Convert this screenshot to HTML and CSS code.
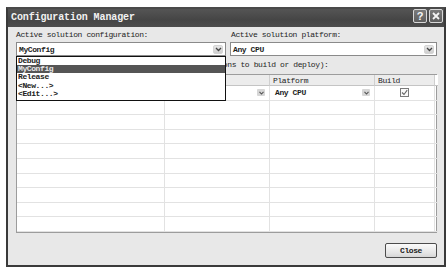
FILE: index.html
```html
<!DOCTYPE html>
<html lang="en">
<head>
  <meta charset="UTF-8">
  <title>Configuration Manager</title>
  <link rel="stylesheet" href="styles.css">
</head>
<body>

  <div class="window">
    <!-- Title bar -->
    <div class="titlebar">
      <span class="title">Configuration Manager</span>
      <div class="title-buttons">
        <span class="tbtn">?</span>
        <span class="tbtn">
          <svg width="10" height="10" viewBox="0 0 10 10"><path d="M2 2 L8 8 M8 2 L2 8" stroke="#f4f4f4" stroke-width="1.8"/></svg>
        </span>
      </div>
    </div>

    <div class="dialog-body">
      <!-- Solution selectors -->
      <div class="selectors">
        <div class="field config-field">
          <div class="field-label">Active solution configuration:</div>
          <div class="combo">
            <span class="combo-text">MyConfig</span>
            <span class="arrow"><svg width="7" height="5" viewBox="0 0 7 5"><path d="M1 1 L3.5 3.5 L6 1" stroke="#444" stroke-width="1.3" fill="none"/></svg></span>

            <!-- open dropdown list -->
            <ul class="droplist">
              <li>Debug</li>
              <li class="selected">MyConfig</li>
              <li>Release</li>
              <li>&lt;New...&gt;</li>
              <li>&lt;Edit...&gt;</li>
            </ul>
          </div>
        </div>
        <div class="field platform-field">
          <div class="field-label">Active solution platform:</div>
          <div class="combo">
            <span class="combo-text">Any CPU</span>
            <span class="arrow"><svg width="7" height="5" viewBox="0 0 7 5"><path d="M1 1 L3.5 3.5 L6 1" stroke="#444" stroke-width="1.3" fill="none"/></svg></span>
          </div>
        </div>
      </div>

      <div class="contexts-label">Project contexts (check the project configurations to build or deploy):</div>

      <!-- Project contexts grid -->
      <div class="grid">
        <div class="cell head">Project</div>
        <div class="cell head">Configuration</div>
        <div class="cell head">Platform</div>
        <div class="cell head">Build</div>
        <div class="cell head filler"></div>

        <div class="cell"></div>
        <div class="cell with-arrow"><span></span><span class="mini-arrow"><svg width="5" height="4" viewBox="0 0 5 4"><path d="M0.5 0.8 L2.5 3 L4.5 0.8" stroke="#555" stroke-width="1.1" fill="none"/></svg></span></div>
        <div class="cell with-arrow"><span class="platform-text">Any CPU</span><span class="mini-arrow"><svg width="5" height="4" viewBox="0 0 5 4"><path d="M0.5 0.8 L2.5 3 L4.5 0.8" stroke="#555" stroke-width="1.1" fill="none"/></svg></span></div>
        <div class="cell centered"><span class="checkbox"><svg width="7" height="7" viewBox="0 0 7 7"><path d="M1 3.5 L3 5.5 L6.2 1.2" stroke="#666" stroke-width="1.1" fill="none"/></svg></span></div>
        <div class="cell filler"></div>
      </div>

      <div class="footer">
        <button class="close-btn"><u>C</u>lose</button>
      </div>
    </div>
  </div>

  <script>
    // fill the empty rows of the grid
    const grid = document.querySelector(".grid");
    for (let r = 0; r < 9; r++) {
      for (let c = 0; c < 5; c++) {
        const cell = document.createElement("div");
        cell.classList.add("cell");
        if (c === 4) cell.classList.add("filler");
        grid.appendChild(cell);
      }
    }
  </script>

</body>
</html>
```

FILE: styles.css
```css
body {
  margin: 0;
  background-color: #fff;
  font-family: "Liberation Mono", "DejaVu Sans Mono", monospace;
  font-size: 8px;
  letter-spacing: -0.4px;
  color: #1e1e1e;
}

/* Dialog frame */
.window {
  margin: 7px 0 0 6px;
  width: 440px;
  height: 260px;
  box-sizing: border-box;
  border: 2px solid #3a3a3a;
  border-top-color: #4a4a4a;
  background-color: #e8e8e8;
  display: flex;
  flex-direction: column;
}

.titlebar {
  height: 18px;
  display: flex;
  justify-content: space-between;
  align-items: flex-start;
  background: linear-gradient(#555, #454545 60%, #4c4c4c);
  padding-left: 3px;
}

.title {
  line-height: 18px;
  font-size: 10px;
  font-weight: bold;
  letter-spacing: -0.1px;
  color: #f2f2f2;
}

.title-buttons {
  display: flex;
  gap: 2px;
  margin-right: 1px;
}

.tbtn {
  width: 14px;
  height: 14px;
  box-sizing: border-box;
  border: 1px solid #d8d8d8;
  border-radius: 2px;
  background: linear-gradient(#7a7a7a, #5e5e5e);
  color: #f4f4f4;
  font-family: "Liberation Sans", sans-serif;
  font-weight: bold;
  font-size: 11px;
  letter-spacing: 0;
  line-height: 12px;
  display: flex;
  justify-content: center;
  align-items: center;
}

.dialog-body {
  flex: 1;
  padding: 3px 7px 0 8px;
  display: flex;
  flex-direction: column;
}

/* Configuration / platform combos */
.selectors {
  display: flex;
  gap: 4px;
}

.config-field {
  width: 210px;
}

.platform-field {
  flex: 1;
}

.platform-field .field-label {
  padding-left: 1px;
}

.field-label {
  line-height: 10px;
  height: 10px;
}

.combo {
  position: relative;
  margin-top: 2px;
  height: 14px;
  box-sizing: border-box;
  border: 1px solid #8a8a8a;
  background-color: #fff;
  display: flex;
  align-items: center;
  justify-content: space-between;
  padding-left: 2px;
}

.combo-text {
  font-weight: bold;
}

.arrow {
  width: 10px;
  height: 9px;
  margin-right: 2px;
  background: linear-gradient(#e6e6e6, #cfcfcf);
  border: 1px solid #d4d4d4;
  border-radius: 2px;
  box-sizing: border-box;
  display: flex;
  justify-content: center;
  align-items: center;
}

.droplist {
  position: absolute;
  top: 13px;
  left: -1px;
  width: 210px;
  height: 45px;
  box-sizing: border-box;
  margin: 0;
  padding: 0;
  list-style: none;
  border: 1px solid #111;
  background-color: #fff;
  z-index: 10;
}

.droplist li {
  line-height: 8.2px;
  height: 8.2px;
  padding-left: 1px;
  font-weight: bold;
  color: #222;
}

.droplist li.selected {
  background-color: #555;
  color: #e8e8e8;
}

.contexts-label {
  margin-top: 4px;
  line-height: 10px;
  height: 10px;
}

/* Project grid */
.grid {
  margin-top: 4px;
  width: 421px;
  box-sizing: border-box;
  border: 1px solid #9c9c9c;
  background-color: #fff;
  display: grid;
  grid-template-columns: 148px 105px 105px 60px 1fr;
  grid-template-rows: 11px;
  grid-auto-rows: 14.6px;
}

.cell {
  box-sizing: border-box;
  border-right: 1px solid #e2e2e2;
  border-bottom: 1px solid #e2e2e2;
  display: flex;
  align-items: center;
  padding-left: 3px;
  overflow: hidden;
  white-space: nowrap;
}

.cell.head {
  background-color: #ececec;
  border-right-color: #cfcfcf;
  border-bottom-color: #c4c4c4;
}

.cell.filler {
  border-right: none;
}

.cell.head.filler {
  background-color: #fff;
  border-left: 1px solid #cfcfcf;
  margin-left: -1px;
}

.cell.with-arrow {
  justify-content: space-between;
  padding-right: 4px;
}

.platform-text {
  padding-left: 2px;
  font-weight: bold;
}

.mini-arrow {
  width: 8px;
  height: 7px;
  background-color: #d6d6d6;
  border-radius: 1px;
  display: flex;
  justify-content: center;
  align-items: center;
}

.cell.centered {
  justify-content: center;
  padding-left: 0;
}

.checkbox {
  width: 9px;
  height: 9px;
  box-sizing: border-box;
  border: 1px solid #7a7a7a;
  background-color: #fafafa;
  display: flex;
  justify-content: center;
  align-items: center;
}

.footer {
  display: flex;
  justify-content: flex-end;
  margin-top: 10px;
}

.close-btn {
  width: 52px;
  height: 15px;
  padding: 0;
  border: 1px solid #4c4c4c;
  border-radius: 2px;
  background: linear-gradient(#fbfbfb, #e4e4e4 70%, #d6d6d6);
  font-family: "Liberation Mono", monospace;
  font-size: 8px;
  letter-spacing: -0.4px;
  font-weight: bold;
  color: #222;
}

.close-btn u {
  text-decoration: none;
}
```
